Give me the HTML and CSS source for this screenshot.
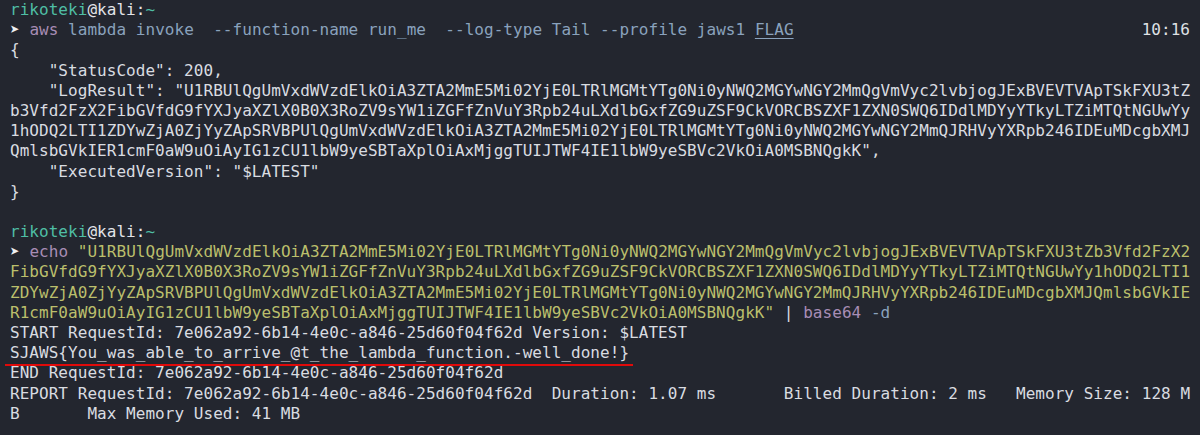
FILE: index.html
```html
<!DOCTYPE html>
<html>
<head>
<meta charset="utf-8">
<link rel="stylesheet" href="styles.css">
</head>
<body>
<div class="term">
<div class="ln"><span class="user">rikoteki</span><span class="host">@kali:</span><span class="user">~</span></div>
<div class="ln row"><span><span class="arrow">➤</span> <span class="cmd">aws</span> <span class="arg">lambda invoke  --function-name run_me  --log-type Tail --profile jaws1 <span class="ul">FLAG</span></span></span><span class="time">10:16</span></div>
<div class="ln">{</div>
<div class="ln">    "StatusCode": 200,</div>
<div class="ln">    "LogResult": "U1RBUlQgUmVxdWVzdElkOiA3ZTA2MmE5Mi02YjE0LTRlMGMtYTg0Ni0yNWQ2MGYwNGY2MmQgVmVyc2lvbjogJExBVEVTVApTSkFXU3tZ</div>
<div class="ln">b3Vfd2FzX2FibGVfdG9fYXJyaXZlX0B0X3RoZV9sYW1iZGFfZnVuY3Rpb24uLXdlbGxfZG9uZSF9CkVORCBSZXF1ZXN0SWQ6IDdlMDYyYTkyLTZiMTQtNGUwYy</div>
<div class="ln">1hODQ2LTI1ZDYwZjA0ZjYyZApSRVBPUlQgUmVxdWVzdElkOiA3ZTA2MmE5Mi02YjE0LTRlMGMtYTg0Ni0yNWQ2MGYwNGY2MmQJRHVyYXRpb246IDEuMDcgbXMJ</div>
<div class="ln">QmlsbGVkIER1cmF0aW9uOiAyIG1zCU1lbW9yeSBTaXplOiAxMjggTUIJTWF4IE1lbW9yeSBVc2VkOiA0MSBNQgkK",</div>
<div class="ln">    "ExecutedVersion": "$LATEST"</div>
<div class="ln">}</div>
<div class="ln"> </div>
<div class="ln"><span class="user">rikoteki</span><span class="host">@kali:</span><span class="user">~</span></div>
<div class="ln"><span class="arrow">➤</span> <span class="cmd">echo</span> <span class="str">"U1RBUlQgUmVxdWVzdElkOiA3ZTA2MmE5Mi02YjE0LTRlMGMtYTg0Ni0yNWQ2MGYwNGY2MmQgVmVyc2lvbjogJExBVEVTVApTSkFXU3tZb3Vfd2FzX2</span></div>
<div class="ln str">FibGVfdG9fYXJyaXZlX0B0X3RoZV9sYW1iZGFfZnVuY3Rpb24uLXdlbGxfZG9uZSF9CkVORCBSZXF1ZXN0SWQ6IDdlMDYyYTkyLTZiMTQtNGUwYy1hODQ2LTI1</div>
<div class="ln str">ZDYwZjA0ZjYyZApSRVBPUlQgUmVxdWVzdElkOiA3ZTA2MmE5Mi02YjE0LTRlMGMtYTg0Ni0yNWQ2MGYwNGY2MmQJRHVyYXRpb246IDEuMDcgbXMJQmlsbGVkIE</div>
<div class="ln"><span class="str">R1cmF0aW9uOiAyIG1zCU1lbW9yeSBTaXplOiAxMjggTUIJTWF4IE1lbW9yeSBVc2VkOiA0MSBNQgkK"</span> | <span class="cmd">base64</span> <span class="arg">-d</span></div>
<div class="ln">START RequestId: 7e062a92-6b14-4e0c-a846-25d60f04f62d Version: $LATEST</div>
<div class="ln"><span class="flag">SJAWS{You_was_able_to_arrive_@t_the_lambda_function.-well_done!}</span></div>
<div class="ln">END RequestId: 7e062a92-6b14-4e0c-a846-25d60f04f62d</div>
<div class="ln">REPORT RequestId: 7e062a92-6b14-4e0c-a846-25d60f04f62d  Duration: 1.07 ms       Billed Duration: 2 ms   Memory Size: 128 M</div>
<div class="ln">B       Max Memory Used: 41 MB</div>
</div>
</body>
</html>
```
FILE: styles.css
```css
html, body {
  margin: 0;
  padding: 0;
  background: #23262f;
}
body {
  width: 1200px;
  height: 435px;
  overflow: hidden;
}
.term {
  padding: 0 0 0 10px;
  font-family: "DejaVu Sans Mono", "Liberation Mono", monospace;
  font-size: 16px;
  letter-spacing: 0.04px;
  line-height: 20.2px;
  color: #d9dce1;
}
.ln {
  white-space: pre;
  height: 20.2px;
}
.row {
  display: flex;
  justify-content: space-between;
  width: 1180px;
}
.user { color: #4fbea5; }
.host { color: #e2e4e8; }
.arrow { color: #eef0f2; }
.cmd { color: #a88db5; }
.arg { color: #8aa2bd; }
.ul { text-decoration: underline; text-underline-offset: 3px; }
.time { color: #dfe1e5; }
.str { color: #bbbf6c; }
.flag {
  position: relative;
}
.flag::after {
  content: "";
  position: absolute;
  left: -5px;
  right: -4px;
  bottom: -4px;
  height: 2px;
  background: #e00a0a;
}
```
